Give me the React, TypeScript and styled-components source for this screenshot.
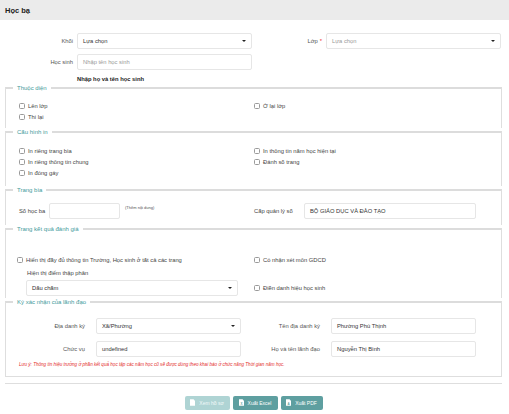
import React from 'react';
import styled, { createGlobalStyle } from 'styled-components';

const Global = createGlobalStyle`
  html, body { margin: 0; padding: 0; background: #fff; }
  body { font-family: "Liberation Sans", Arial, sans-serif; color: #444; font-size: 5.8px; }
  * { box-sizing: border-box; }
`;

const Page = styled.div`
  width: 509px;
  height: 414px;
  overflow: hidden;
  background: #fff;
`;

const Header = styled.div`
  height: 20px;
  background: #ebebeb;
  display: flex;
  align-items: center;
  padding-left: 5px;
  font-weight: 700;
  font-size: 7.5px;
  color: #222;
`;

const Body = styled.div`
  padding: 13px 7px 0 5px;
`;

const TopGrid = styled.div`
  display: grid;
  grid-template-columns: 68px 175px 66px 175px;
  column-gap: 4px;
  row-gap: 5px;
  align-items: center;
`;

const FieldLabel = styled.label`
  text-align: right;
  color: #555;
  white-space: nowrap;
`;

const Req = styled.span`
  color: #e33;
  margin-left: 2px;
`;

const Hint = styled.div`
  grid-column: 2;
  font-weight: 700;
  color: #222;
  line-height: 8px;
`;

const Box = styled.div<{ $w?: number }>`
  height: 16px;
  width: ${p => (p.$w ? `${p.$w}px` : '100%')};
  border: 1px solid #e6e6e6;
  border-radius: 2px;
  background: #fff;
  display: flex;
  align-items: center;
  padding: 0 5px;
  color: #333;
  white-space: nowrap;
`;

const Placeholder = styled.span`
  color: #999;
`;

const SelectBox = styled(Box)`
  justify-content: space-between;
  &::after {
    content: '';
    border-left: 2px solid transparent;
    border-right: 2px solid transparent;
    border-top: 2.5px solid #222;
  }
`;

const Sections = styled.div`
  margin-top: 1px;
`;

const Fieldset = styled.fieldset<{ $pt: number; $pb: number; $last?: boolean }>`
  margin: 0;
  min-width: 0;
  padding: ${p => p.$pt}px 0 ${p => p.$pb}px 13px;
  border: 0;
  border-top: 2px solid #dcdcdc;
  border-left: 1px solid #dedede;
  border-right: 1px solid #dedede;
  border-bottom: ${p => (p.$last ? '1px solid #dedede' : '0')};
`;

const Legend = styled.legend`
  padding: 0 4px;
  margin-left: -6px;
  line-height: 8px;
  color: #3f9a9b;
  font-size: 6px;
`;

const TwoCol = styled.div<{ $rg?: number }>`
  display: grid;
  grid-template-columns: 235px 1fr;
  row-gap: ${p => p.$rg ?? 0}px;
  align-items: center;
`;

const Check = styled.label<{ $shift?: number }>`
  display: flex;
  align-items: center;
  gap: 3px;
  height: 11px;
  margin-left: ${p => p.$shift ?? 0}px;
  white-space: nowrap;
  color: #444;
`;

const CheckBox = styled.input.attrs({ type: 'checkbox' })`
  appearance: none;
  margin: 0;
  width: 6px;
  height: 6px;
  border: 0.8px solid #9a9a9a;
  border-radius: 1.5px;
  background: #fff;
  flex: none;
`;

const InlineField = styled.div`
  display: flex;
  align-items: center;
`;

const SmallNote = styled.span`
  font-size: 4px;
  color: #555;
  align-self: flex-start;
  margin: 2px 0 0 5px;
`;

const InlineLabel = styled.span<{ $w: number }>`
  width: ${p => p.$w}px;
  color: #444;
  white-space: nowrap;
`;

const SubLabel = styled.div`
  line-height: 8px;
  padding-left: 8px;
  color: #444;
`;

const DecimalSelect = styled(SelectBox)`
  margin-left: 7px;
`;

const SignGrid = styled.div`
  display: grid;
  grid-template-columns: 66px 145px 68px 145px;
  column-gap: 11px;
  row-gap: 7px;
  align-items: center;
`;

const Note = styled.div`
  margin-top: 4px;
  color: #e32a2a;
  font-style: italic;
  font-size: 4.6px;
  line-height: 7px;
  white-space: nowrap;
`;

const Separator = styled.div`
  margin-top: 6px;
  border-top: 1.5px solid #dedede;
`;

const Actions = styled.div`
  display: flex;
  justify-content: center;
  gap: 3px;
  margin-top: 12px;
`;

const Button = styled.button<{ $w: number; $disabled?: boolean }>`
  width: ${p => p.$w}px;
  height: 14px;
  border: 0;
  border-radius: 2px;
  background: ${p => (p.$disabled ? '#afd4d4' : '#5e9fa0')};
  color: ${p => (p.$disabled ? '#f2f9f9' : '#fff')};
  font-family: inherit;
  font-size: 5px;
  display: flex;
  align-items: center;
  justify-content: center;
  gap: 4px;
  padding: 0;
`;

const DocIcon: React.FC<{ letter: string; fill: string }> = ({ letter, fill }) => (
  <svg width="5" height="7" viewBox="0 0 10 13">
    <path d="M0 0 H7 L10 3 V13 H0 Z" fill="#fff" />
    <text x="5" y="10.5" fontSize="6" textAnchor="middle" fill={fill} fontFamily="Liberation Sans, Arial, sans-serif" fontWeight="700">{letter}</text>
  </svg>
);

const CB: React.FC<{ label: string; shift?: number }> = ({ label, shift }) => (
  <Check $shift={shift}>
    <CheckBox />
    {label}
  </Check>
);

export default function App() {
  return (
    <Page>
      <Global />
      <Header>Học bạ</Header>
      <Body>
        <TopGrid>
          <FieldLabel>Khối</FieldLabel>
          <SelectBox>Lựa chọn</SelectBox>
          <FieldLabel>
            Lớp<Req>*</Req>
          </FieldLabel>
          <SelectBox>
            <Placeholder>Lựa chọn</Placeholder>
          </SelectBox>
          <FieldLabel>Học sinh</FieldLabel>
          <Box>
            <Placeholder>Nhập tên học sinh</Placeholder>
          </Box>
          <span />
          <span />
          <Hint>Nhập họ và tên học sinh</Hint>
        </TopGrid>

        <Sections>
          <Fieldset $pt={8.5} $pb={5.5}>
            <Legend>Thuộc diện</Legend>
            <TwoCol>
              <CB label="Lên lớp" />
              <CB label="Ở lại lớp" />
              <CB label="Thi lại" />
            </TwoCol>
          </Fieldset>

          <Fieldset $pt={9.5} $pb={7.5}>
            <Legend>Cấu hình in</Legend>
            <TwoCol>
              <CB label="In riêng trang bìa" />
              <CB label="In thông tin năm học hiện tại" />
              <CB label="In riêng thông tin chung" />
              <CB label="Đánh số trang" />
              <CB label="In đóng gáy" />
            </TwoCol>
          </Fieldset>

          <Fieldset $pt={9} $pb={6}>
            <Legend>Trang bìa</Legend>
            <TwoCol>
              <InlineField>
                <InlineLabel $w={30}>Số học ba</InlineLabel>
                <Box $w={71} />
                <SmallNote>(Thêm nội dung)</SmallNote>
              </InlineField>
              <InlineField>
                <InlineLabel $w={50}>Cấp quản lý số</InlineLabel>
                <Box $w={172}>BỘ GIÁO DỤC VÀ ĐÀO TẠO</Box>
              </InlineField>
            </TwoCol>
          </Fieldset>

          <Fieldset $pt={21.5} $pb={2}>
            <Legend>Trang kết quả đánh giá</Legend>
            <TwoCol $rg={3}>
              <CB label="Hiển thị đầy đủ thông tin Trường, Học sinh ở tất cả các trang" shift={-2} />
              <CB label="Có nhận xét môn GDCD" />
              <SubLabel>Hiện thị điểm thập phân</SubLabel>
              <span />
              <InlineField>
                <DecimalSelect $w={212}>Dấu chấm</DecimalSelect>
              </InlineField>
              <CB label="Điền danh hiệu học sinh" />
            </TwoCol>
          </Fieldset>

          <Fieldset $pt={12} $pb={8} $last>
            <Legend>Ký xác nhận của lãnh đạo</Legend>
            <SignGrid>
              <FieldLabel>Địa danh ký</FieldLabel>
              <SelectBox>Xã/Phường</SelectBox>
              <FieldLabel>Tên địa danh ký</FieldLabel>
              <Box>Phường Phú Thịnh</Box>
              <FieldLabel>Chức vụ</FieldLabel>
              <Box>undefined</Box>
              <FieldLabel>Họ và tên lãnh đạo</FieldLabel>
              <Box>Nguyễn Thị Bình</Box>
            </SignGrid>
            <Note>
              Lưu ý: Thông tin hiệu trưởng ở phần kết quả học tập các năm học cũ sẽ được dùng theo khai báo ở chức năng Thời gian năm học.
            </Note>
          </Fieldset>
        </Sections>

        <Separator />

        <Actions>
          <Button $w={45} $disabled>
            <DocIcon letter="" fill="#afd4d4" />
            Xem hồ sơ
          </Button>
          <Button $w={45}>
            <DocIcon letter="X" fill="#5e9fa0" />
            Xuất Excel
          </Button>
          <Button $w={42}>
            <DocIcon letter="A" fill="#5e9fa0" />
            Xuất PDF
          </Button>
        </Actions>
      </Body>
    </Page>
  );
}
